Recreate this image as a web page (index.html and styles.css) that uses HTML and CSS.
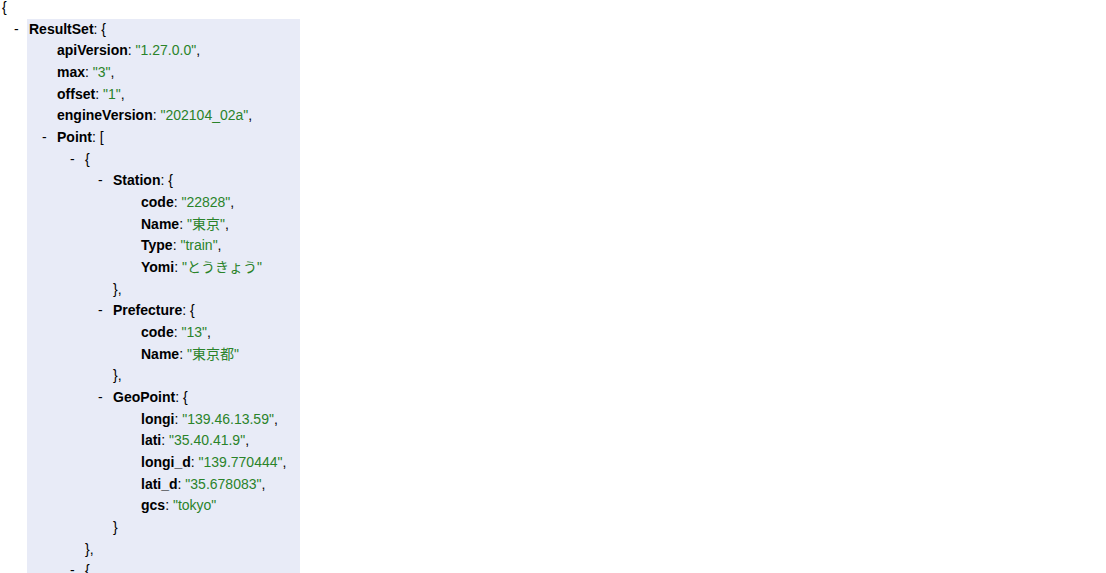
FILE: index.html
```html
<!DOCTYPE html>
<html lang="ja">
<head>
<meta charset="utf-8">
<title>JSON</title>
<link rel="stylesheet" href="styles.css">
</head>
<body>
<div class="json">
  <div class="line">{</div>
  <ul class="obj root">
    <li class="item hovered">
      <span class="collapser">-</span><span class="key">ResultSet</span>: {
      <ul class="obj">
        <li class="item"><span class="key">apiVersion</span>: <span class="str">"1.27.0.0"</span>,</li>
        <li class="item"><span class="key">max</span>: <span class="str">"3"</span>,</li>
        <li class="item"><span class="key">offset</span>: <span class="str">"1"</span>,</li>
        <li class="item"><span class="key">engineVersion</span>: <span class="str">"202104_02a"</span>,</li>
        <li class="item">
          <span class="collapser">-</span><span class="key">Point</span>: [
          <ul class="obj">
            <li class="item">
              <span class="collapser">-</span>{
              <ul class="obj">
                <li class="item">
                  <span class="collapser">-</span><span class="key">Station</span>: {
                  <ul class="obj">
                    <li class="item"><span class="key">code</span>: <span class="str">"22828"</span>,</li>
                    <li class="item"><span class="key">Name</span>: <span class="str">"東京"</span>,</li>
                    <li class="item"><span class="key">Type</span>: <span class="str">"train"</span>,</li>
                    <li class="item"><span class="key">Yomi</span>: <span class="str">"とうきょう"</span></li>
                  </ul>
                  <div class="line">},</div>
                </li>
                <li class="item">
                  <span class="collapser">-</span><span class="key">Prefecture</span>: {
                  <ul class="obj">
                    <li class="item"><span class="key">code</span>: <span class="str">"13"</span>,</li>
                    <li class="item"><span class="key">Name</span>: <span class="str">"東京都"</span></li>
                  </ul>
                  <div class="line">},</div>
                </li>
                <li class="item">
                  <span class="collapser">-</span><span class="key">GeoPoint</span>: {
                  <ul class="obj">
                    <li class="item"><span class="key">longi</span>: <span class="str">"139.46.13.59"</span>,</li>
                    <li class="item"><span class="key">lati</span>: <span class="str">"35.40.41.9"</span>,</li>
                    <li class="item"><span class="key">longi_d</span>: <span class="str">"139.770444"</span>,</li>
                    <li class="item"><span class="key">lati_d</span>: <span class="str">"35.678083"</span>,</li>
                    <li class="item"><span class="key">gcs</span>: <span class="str">"tokyo"</span></li>
                  </ul>
                  <div class="line">}</div>
                </li>
              </ul>
              <div class="line">},</div>
            </li>
            <li class="item">
              <span class="collapser">-</span>{
              <ul class="obj">
                <li class="item">
                  <span class="collapser">-</span><span class="key">Station</span>: {
                  <ul class="obj">
                    <li class="item"><span class="key">code</span>: <span class="str">"22671"</span>,</li>
                    <li class="item"><span class="key">Name</span>: <span class="str">"品川"</span>,</li>
                    <li class="item"><span class="key">Type</span>: <span class="str">"train"</span>,</li>
                    <li class="item"><span class="key">Yomi</span>: <span class="str">"しながわ"</span></li>
                  </ul>
                  <div class="line">}</div>
                </li>
              </ul>
              <div class="line">}</div>
            </li>
          </ul>
          <div class="line">]</div>
        </li>
      </ul>
      <div class="line">}</div>
    </li>
  </ul>
  <div class="line">}</div>
</div>
</body>
</html>
```

FILE: styles.css
```css
html, body {
  margin: 0;
  padding: 0;
  background: #ffffff;
}

body {
  font-family: "Liberation Sans", "Noto Sans CJK JP", sans-serif;
  font-size: 14px;
  line-height: 21.67px;
  color: #000000;
  overflow: hidden;
}

.json {
  margin-top: -3px;
  padding-left: 2px;
}

.line {
  white-space: nowrap;
}

.obj {
  list-style: none;
  margin: 0;
  padding: 0 0 0 26px;
}

.obj.root {
  padding-left: 25px;
}

.item {
  position: relative;
  padding-left: 2px;
  white-space: nowrap;
}

.hovered {
  width: fit-content;
  padding-right: 14px;
  background: #e8ebf7;
}

.collapser {
  position: absolute;
  left: -13px;
  top: 0;
  font-weight: normal;
}

.key {
  font-weight: bold;
}

.str {
  color: #2a832a;
  line-height: 14px;
}
```
